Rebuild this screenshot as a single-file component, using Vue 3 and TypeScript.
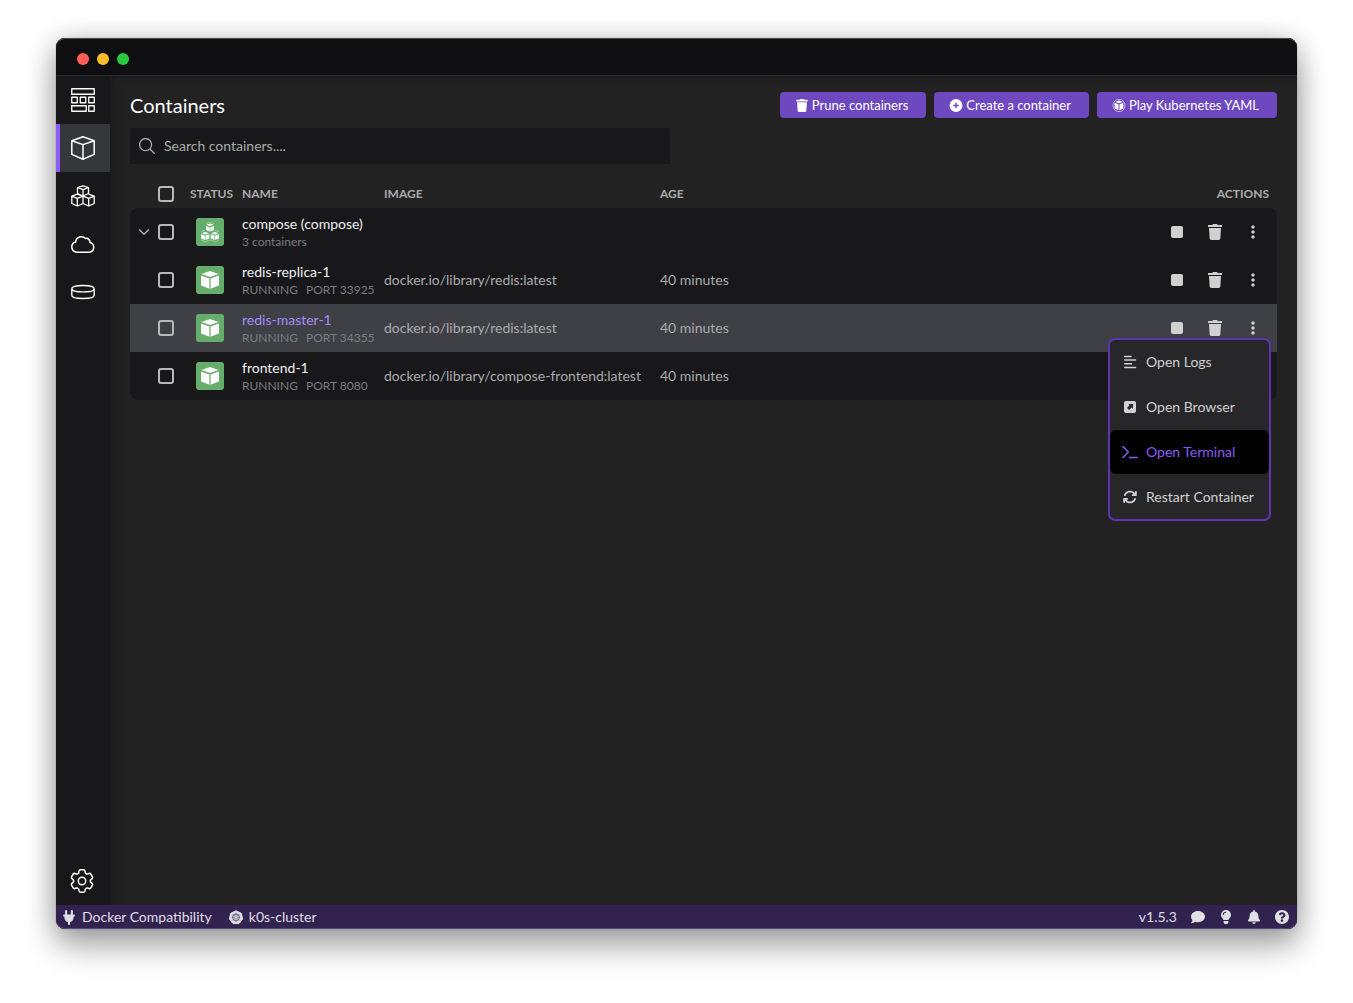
<script setup lang="ts">
import { ref } from 'vue'

interface Row {
  id: string
  name: string
  detail: string[]
  image: string
  age: string
  group?: boolean
  active?: boolean
}

const search = ref('')
const selected = ref<string[]>([])
const openMenu = ref<string | null>('redis-master')
const hovered = ref('Open Terminal')

const navItems = [
  { icon: 'dashboard', label: 'Dashboard' },
  { icon: 'cube', label: 'Containers', current: true },
  { icon: 'pods', label: 'Pods' },
  { icon: 'cloud', label: 'Images' },
  { icon: 'volume', label: 'Volumes' },
]

const toolbar = [
  { icon: 'trash', label: 'Prune containers' },
  { icon: 'plus', label: 'Create a container' },
  { icon: 'play', label: 'Play Kubernetes YAML' },
]

const rows: Row[] = [
  { id: 'compose', name: 'compose (compose)', detail: ['3 containers'], image: '', age: '', group: true },
  { id: 'redis-replica', name: 'redis-replica-1', detail: ['RUNNING', 'PORT 33925'], image: 'docker.io/library/redis:latest', age: '40 minutes' },
  { id: 'redis-master', name: 'redis-master-1', detail: ['RUNNING', 'PORT 34355'], image: 'docker.io/library/redis:latest', age: '40 minutes', active: true },
  { id: 'frontend', name: 'frontend-1', detail: ['RUNNING', 'PORT 8080'], image: 'docker.io/library/compose-frontend:latest', age: '40 minutes' },
]

const menuItems = [
  { icon: 'logs', label: 'Open Logs' },
  { icon: 'browser', label: 'Open Browser' },
  { icon: 'terminal', label: 'Open Terminal' },
  { icon: 'restart', label: 'Restart Container' },
]

const statusIcons = [
  { icon: 'comment', label: 'Feedback' },
  { icon: 'bulb', label: 'Tips' },
  { icon: 'bell', label: 'Notifications' },
  { icon: 'help', label: 'Help' },
]

function toggleMenu(id: string) {
  openMenu.value = openMenu.value === id ? null : id
}

function toggleAll(event: Event) {
  const on = (event.target as HTMLInputElement).checked
  selected.value = on ? rows.map((row) => row.id) : []
}
</script>

<template>
  <svg class="sprite" aria-hidden="true">
    <symbol id="dashboard" viewBox="0 0 24 24">
      <path d="M.75.75h22.5v5.5H.75zM.75 9.25h5.5v5.5H.75zM9.25 9.25h5.5v5.5h-5.5zM17.75 9.25h5.5v5.5h-5.5zM.75 17.75h14.5v5.5H.75zM17.75 17.75h5.5v5.5h-5.5z" fill="none" stroke="currentColor" stroke-width="1.3" stroke-linejoin="round" />
    </symbol>
    <symbol id="cube" viewBox="0 0 24 24">
      <path d="M12 .8 23.2 4.8V18.4L12 23.2.8 18.4V4.8zM.8 4.8 12 8.6 23.2 4.8M12 8.6V23.2" fill="none" stroke="currentColor" stroke-width="1.5" stroke-linejoin="round" />
    </symbol>
    <symbol id="pods" viewBox="0 0 24 24">
      <path d="M12 1.8 17.5 3.5V9.5L12 12 6.5 9.5V3.5zM6.5 3.5 12 5.6 17.5 3.5M12 5.6V12M6.3 10.2 12 12.2V19.5L6.3 22 .8 19.5V12.2zM.8 12.2 6.3 14.4 12 12.2M6.3 14.4V22M17.7 10.2 23.2 12.2V19.5L17.7 22 12 19.5V12.2M12 12.2 17.7 14.4 23.2 12.2M17.7 14.4V22" fill="none" stroke="currentColor" stroke-width="1.3" stroke-linejoin="round" />
    </symbol>
    <symbol id="cloud" viewBox="0 0 24 24">
      <path d="M6 20.2A5.2 5.2 0 0 1 4.6 10 5.9 5.9 0 0 1 14.6 6.4 3.8 3.8 0 0 1 19 10.4 5 5 0 0 1 18.3 20.2z" fill="none" stroke="currentColor" stroke-width="1.5" stroke-linejoin="round" />
    </symbol>
    <symbol id="volume" viewBox="0 0 24 24">
      <path d="M.8 8.700C.8 6.700 5.600 5.500 12 5.500S23.200 6.700 23.200 8.700 18.400 11.900 12 11.900.8 10.700.8 8.700V15.300C.8 17.300 5.600 18.500 12 18.500S23.200 17.300 23.200 15.300V8.700" fill="none" stroke="currentColor" stroke-width="1.4" />
    </symbol>
    <symbol id="gear" viewBox="2.3 2.3 19.4 19.4">
      <path d="M9.594 3.94c.09-.542.56-.94 1.11-.94h2.593c.55 0 1.02.398 1.11.94l.213 1.281c.063.374.313.686.645.87.074.04.147.083.22.127.325.196.72.257 1.075.124l1.217-.456a1.125 1.125 0 0 1 1.37.49l1.296 2.247a1.125 1.125 0 0 1-.26 1.431l-1.003.827c-.293.241-.438.613-.43.992a7.723 7.723 0 0 1 0 .255c-.008.378.137.75.43.991l1.004.827c.424.35.534.955.26 1.43l-1.298 2.247a1.125 1.125 0 0 1-1.369.491l-1.217-.456c-.355-.133-.75-.072-1.076.124a6.47 6.47 0 0 1-.22.128c-.331.183-.581.495-.644.869l-.213 1.281c-.09.543-.56.94-1.11.94h-2.594c-.55 0-1.019-.398-1.11-.94l-.213-1.281c-.062-.374-.312-.686-.644-.87a6.52 6.52 0 0 1-.22-.127c-.325-.196-.72-.257-1.076-.124l-1.217.456a1.125 1.125 0 0 1-1.369-.49l-1.297-2.247a1.125 1.125 0 0 1 .26-1.431l1.004-.827c.292-.24.437-.613.43-.991a6.932 6.932 0 0 1 0-.255c.007-.38-.138-.751-.43-.992l-1.004-.827a1.125 1.125 0 0 1-.26-1.43l1.297-2.247a1.125 1.125 0 0 1 1.37-.491l1.216.456c.356.133.751.072 1.076-.124.072-.044.146-.086.22-.128.332-.183.582-.495.644-.869l.214-1.28ZM15 12a3 3 0 1 1-6 0 3 3 0 0 1 6 0Z" fill="none" stroke="currentColor" stroke-width="1.2" stroke-linejoin="round" />
    </symbol>
    <symbol id="search" viewBox="0 0 16 16">
      <path d="M11.2 11.2 15.3 15.3M12.6 6.6a6 6 0 1 1-12 0 6 6 0 0 1 12 0z" fill="none" stroke="currentColor" stroke-width="1.3" stroke-linecap="round" />
    </symbol>
    <symbol id="chevron" viewBox="0 0 12 12">
      <path d="M1.500 3.800 6 8.300 10.500 3.800" fill="none" stroke="currentColor" stroke-width="1.5" stroke-linecap="round" stroke-linejoin="round" />
    </symbol>
    <symbol id="trash" viewBox="0 0 448 512">
      <path d="M432 32H312l-9.4-18.7A24 24 0 0 0 281.1 0H166.8a23.72 23.72 0 0 0-21.4 13.3L136 32H16A16 16 0 0 0 0 48v32a16 16 0 0 0 16 16h416a16 16 0 0 0 16-16V48a16 16 0 0 0-16-16zM53.2 467a48 48 0 0 0 47.9 45h245.8a48 48 0 0 0 47.9-45L416 128H32z" fill="currentColor" />
    </symbol>
    <symbol id="plus" viewBox="1.5 1.5 13 13">
      <path fill-rule="evenodd" d="M8 1.5a6.5 6.5 0 1 0 0 13 6.5 6.5 0 0 0 0-13zM7.3 5.2h1.4v2.1h2.1v1.4H8.700v2.1H7.300V8.700H5.200V7.300h2.100z" fill="currentColor" />
    </symbol>
    <symbol id="play" viewBox="1.3 1.3 13.4 13.4">
      <circle cx="8" cy="8" r="6.3" fill="none" stroke="currentColor" stroke-width=".8" opacity=".7" />
      <path d="M8 2.800 12 4.300 8 5.800 4 4.300zM3.400 5.200 7.500 6.700V13L3.400 11.200zM12.600 5.200 8.500 6.700V13L12.600 11.200z" fill="currentColor" />
    </symbol>
    <symbol id="box" viewBox="0 0 20 20">
      <path d="M10 1 18.500 4 10 7 1.500 4zM1 5.400 9.400 8.400V18.800L1 15.500zM19 5.400 10.600 8.400V18.800L19 15.500z" fill="currentColor" />
    </symbol>
    <symbol id="boxes" viewBox="0 0 20 20">
      <path d="M10 1.500 13.600 2.800 10 4.100 6.400 2.800zM6 4 9.700 5.300V9.400L6 8zM14 4 10.300 5.300V9.400L14 8zM5.200 10 8.900 11.300 5.200 12.600 1.500 11.300zM1 12.300 4.900 13.600V18L1 16.500zM9.300 12.300 5.500 13.600V18L9.300 16.500zM14.800 10 18.500 11.300 14.800 12.600 11.100 11.300zM10.700 12.300 14.500 13.600V18L10.700 16.500zM19 12.300 15.100 13.600V18L19 16.500z" fill="currentColor" />
      <path d="M6 1.500 10 0 14 1.500M1 9.500 5 8.300M15 8.300 19 9.500M1 18 5 19.600 10 18 15 19.600 19 18" fill="none" stroke="currentColor" stroke-width=".5" opacity=".7" />
    </symbol>
    <symbol id="stop" viewBox="0 0 16 16">
      <rect x="2" y="2" width="12" height="12" rx="2" fill="currentColor" />
    </symbol>
    <symbol id="kebab" viewBox="0 0 16 16">
      <path d="M8 1.300a1.700 1.700 0 1 0 0 3.400 1.700 1.700 0 0 0 0-3.400zM8 6.300a1.700 1.700 0 1 0 0 3.400 1.700 1.700 0 0 0 0-3.400zM8 11.300a1.700 1.700 0 1 0 0 3.400 1.700 1.700 0 0 0 0-3.400z" fill="currentColor" />
    </symbol>
    <symbol id="logs" viewBox="0 0 16 16">
      <path d="M2.700 2.500H9M2.700 6.100H13.500M2.700 9.800H9.500M2.700 13.400H13.500" fill="none" stroke="currentColor" stroke-width="1.5" stroke-linecap="round" />
    </symbol>
    <symbol id="browser" viewBox="0 0 16 16">
      <path fill-rule="evenodd" d="M4 2h8a2 2 0 0 1 2 2v8a2 2 0 0 1-2 2H4a2 2 0 0 1-2-2V4a2 2 0 0 1 2-2zM6.300 5l1.300 1.300L5 8.900 7.100 11l2.600-2.600L11 9.700V5z" fill="currentColor" />
    </symbol>
    <symbol id="terminal" viewBox="0 0 16 16">
      <path d="M1 2.500 6.300 8 1 13.500M7.500 13.500H15.300" fill="none" stroke="currentColor" stroke-width="1.5" stroke-linecap="round" stroke-linejoin="round" />
    </symbol>
    <symbol id="restart" viewBox="-26 -26 564 564">
      <path d="M105.1 202.6c7.7-21.8 20.2-42.3 37.8-59.8c62.5-62.5 163.8-62.5 226.3 0L386.3 160H352c-17.7 0-32 14.3-32 32s14.3 32 32 32H463.9c17.7 0 32-14.3 32-32V80c0-17.7-14.3-32-32-32s-32 14.3-32 32v35.2L414.4 97.6c-87.5-87.5-229.3-87.5-316.8 0C73.2 122 55.6 150.7 44.8 181.4c-5.9 16.7 2.9 34.9 19.5 40.8s34.9-2.9 40.8-19.5zM39 289.3c-5 1.5-9.8 4.2-13.7 8.2c-4 4-6.7 8.8-8.1 14c-.3 1.2-.6 2.5-.8 3.8c-.3 1.7-.4 3.4-.4 5.1V432c0 17.7 14.3 32 32 32s32-14.3 32-32V396.9l17.6 17.5c87.5 87.4 229.3 87.4 316.7 0c24.4-24.4 42.1-53.1 52.9-83.7c5.9-16.7-2.9-34.9-19.5-40.8s-34.9 2.9-40.8 19.5c-7.7 21.8-20.2 42.3-37.8 59.8c-62.5 62.5-163.8 62.5-226.3 0L125.6 352H160c17.7 0 32-14.3 32-32s-14.3-32-32-32H48.4c-1.6 0-3.2.1-4.8.3s-3.1.5-4.6 1z" fill="currentColor" />
    </symbol>
    <symbol id="plug" viewBox="1 .7 14 14.6">
      <path d="M4.200 1.700a1 1 0 0 1 2 0V5h3.600V1.700a1 1 0 0 1 2 0V5h1.200a.6.6 0 0 1 .6.6v1a.6.6 0 0 1-.6.6h-.6v1A4.400 4.400 0 0 1 9 12.400V15H7v-2.600a4.400 4.400 0 0 1-3.400-4.200v-1H3a.6.6 0 0 1-.6-.6v-1A.6.6 0 0 1 3 5h1.200z" fill="currentColor" />
    </symbol>
    <symbol id="helm" viewBox="0 0 16 16">
      <path d="M8 .8 13.700 3.500 15.100 9.600 11.200 14.500H4.800L.9 9.600 2.300 3.500z" fill="currentColor" stroke="currentColor" stroke-linejoin="round" />
      <path d="M8 3V6.600M8 9V12.600M3.300 7.800H6.800M9.200 7.800H12.700M4.600 4.400 7.100 7M11.400 4.400 8.900 7M4.600 11.200 7.100 8.700M11.400 11.200 8.900 8.700M11.700 7.800a3.700 3.700 0 1 1-7.400 0 3.700 3.700 0 0 1 7.400 0z" fill="none" stroke="#31224f" stroke-width=".6" />
    </symbol>
    <symbol id="comment" viewBox="0 0 512 512">
      <path d="M256 32C114.6 32 0 125.1 0 240c0 49.6 21.4 95 57 130.7C44.5 421.1 2.7 466 2.2 466.5c-2.2 2.3-2.8 5.7-1.5 8.7S4.8 480 8 480c66.3 0 116-31.8 140.6-51.4 32.7 12.3 69 19.4 107.4 19.4 141.4 0 256-93.1 256-208S397.4 32 256 32z" fill="currentColor" />
    </symbol>
    <symbol id="bulb" viewBox="1 1 14 14">
      <path fill-rule="evenodd" d="M8 1a5 5 0 0 1 5 5c0 2.300-1.900 3.300-2.500 5.100h-5C4.900 9.300 3 8.300 3 6a5 5 0 0 1 5-5zM8 2.800A3.200 3.200 0 0 0 4.800 6h.9A2.300 2.300 0 0 1 8 3.700zM5.600 12h4.800v1.200A1.800 1.800 0 0 1 8.600 15H7.400a1.800 1.800 0 0 1-1.800-1.800z" fill="currentColor" />
    </symbol>
    <symbol id="bell" viewBox="0 0 448 512">
      <path d="M224 512c35.32 0 63.97-28.65 63.97-64H160.03c0 35.35 28.65 64 63.97 64zm215.39-149.71c-19.32-20.76-55.47-51.99-55.47-154.29 0-77.7-54.48-139.9-127.94-155.16V32c0-17.67-14.32-32-31.98-32s-31.98 14.33-31.98 32v20.84C118.56 68.1 64.08 130.3 64.08 208c0 102.3-36.15 133.53-55.47 154.29-6 6.45-8.66 14.16-8.61 21.71.11 16.4 12.98 32 32.1 32h383.8c19.12 0 32-15.6 32.1-32 .05-7.55-2.61-15.27-8.61-21.71z" fill="currentColor" />
    </symbol>
    <symbol id="help" viewBox="8 8 496 496">
      <path d="M504 256c0 136.997-111.043 248-248 248S8 392.997 8 256C8 119.083 119.043 8 256 8s248 111.083 248 248zM262.655 90c-54.497 0-89.255 22.957-116.549 63.758-3.536 5.286-2.353 12.415 2.715 16.258l34.699 26.31c5.205 3.947 12.621 3.008 16.665-2.122 17.864-22.658 30.113-35.797 57.303-35.797 20.429 0 45.698 13.148 45.698 32.958 0 14.976-12.363 22.667-32.534 33.976C247.128 238.528 216 254.941 216 296v4c0 6.627 5.373 12 12 12h56c6.627 0 12-5.373 12-12v-1.333c0-28.462 83.186-29.647 83.186-106.667 0-58.002-60.165-102-116.531-102zM256 338c-25.365 0-46 20.635-46 46 0 25.364 20.635 46 46 46s46-20.636 46-46c0-25.365-20.636-46-46-46z" fill="currentColor" />
    </symbol>
  </svg>

  <div class="desktop">
    <div class="window">
      <header class="titlebar">
        <button class="light close" aria-label="Close"></button>
        <button class="light minimize" aria-label="Minimize"></button>
        <button class="light zoom" aria-label="Zoom"></button>
      </header>

      <div class="workspace">
        <nav class="sidebar" aria-label="Main">
          <a v-for="item in navItems" :key="item.icon" href="#" class="nav-item" :class="{ current: item.current }" :aria-label="item.label">
            <svg class="nav-icon"><use :href="'#' + item.icon" /></svg>
          </a>
          <a href="#" class="nav-item settings" aria-label="Settings">
            <svg class="nav-icon"><use href="#gear" /></svg>
          </a>
        </nav>

        <main class="content">
          <div class="page-header">
            <h1>Containers</h1>
            <div class="toolbar">
              <button v-for="tool in toolbar" :key="tool.icon" class="primary">
                <svg class="tool-icon"><use :href="'#' + tool.icon" /></svg>
                <span>{{ tool.label }}</span>
              </button>
            </div>
          </div>

          <label class="search">
            <svg class="search-icon"><use href="#search" /></svg>
            <input v-model="search" type="text" placeholder="Search containers...." aria-label="Search containers" />
          </label>

          <table class="containers">
            <colgroup>
              <col class="col-expand" />
              <col class="col-check" />
              <col class="col-status" />
              <col class="col-name" />
              <col class="col-image" />
              <col />
              <col class="col-actions" />
            </colgroup>
            <thead>
              <tr>
                <th></th>
                <th><input type="checkbox" class="check" aria-label="Select all" @change="toggleAll" /></th>
                <th class="status">STATUS</th>
                <th>NAME</th>
                <th>IMAGE</th>
                <th>AGE</th>
                <th class="actions-head">ACTIONS</th>
              </tr>
            </thead>
            <tbody>
              <tr v-for="row in rows" :key="row.id" :class="{ active: row.active }">
                <td class="expand">
                  <button v-if="row.group" class="expander" aria-label="Collapse">
                    <svg class="chevron"><use href="#chevron" /></svg>
                  </button>
                </td>
                <td><input v-model="selected" type="checkbox" class="check" :value="row.id" :aria-label="'Select ' + row.name" /></td>
                <td>
                  <span class="badge">
                    <svg class="badge-icon"><use :href="row.group ? '#boxes' : '#box'" /></svg>
                  </span>
                </td>
                <td>
                  <div class="name">{{ row.name }}</div>
                  <div class="detail"><span v-for="part in row.detail" :key="part">{{ part }}</span></div>
                </td>
                <td>{{ row.image }}</td>
                <td>{{ row.age }}</td>
                <td>
                  <div class="actions">
                    <button class="action" aria-label="Stop"><svg class="action-icon"><use href="#stop" /></svg></button>
                    <button class="action" aria-label="Delete"><svg class="action-icon"><use href="#trash" /></svg></button>
                    <button class="action" aria-label="More" @click="toggleMenu(row.id)"><svg class="action-icon"><use href="#kebab" /></svg></button>
                    <div v-if="openMenu === row.id" class="menu" role="menu">
                      <button v-for="item in menuItems" :key="item.icon" role="menuitem" class="menu-item" :class="{ hovered: hovered === item.label }" @mouseenter="hovered = item.label">
                        <svg class="menu-icon"><use :href="'#' + item.icon" /></svg>
                        <span>{{ item.label }}</span>
                      </button>
                    </div>
                  </div>
                </td>
              </tr>
            </tbody>
          </table>
        </main>
      </div>

      <footer class="statusbar">
        <button class="status-entry"><svg class="status-icon"><use href="#plug" /></svg>Docker Compatibility</button>
        <button class="status-entry"><svg class="status-icon"><use href="#helm" /></svg>k0s-cluster</button>
        <div class="status-right">
          <span>v1.5.3</span>
          <button v-for="item in statusIcons" :key="item.icon" class="status-button" :aria-label="item.label">
            <svg class="status-glyph"><use :href="'#' + item.icon" /></svg>
          </button>
        </div>
      </footer>
    </div>
  </div>
</template>

<style>
body {
  margin: 0;
  background: #fff;
}
</style>

<style scoped>
.sprite {
  position: absolute;
  width: 0;
  height: 0;
}

.desktop {
  box-sizing: border-box;
  min-height: 100vh;
  padding: 38px 56px 74px;
  display: flex;
  font-family: Lato, 'Liberation Sans', sans-serif;
  font-size: 14px;
  line-height: 20px;
  color: #aaabac;
}

button {
  padding: 0;
  border: 0;
  background: none;
  color: inherit;
  font: inherit;
}

svg {
  display: block;
  flex: none;
}

.window {
  flex: 1;
  min-width: 0;
  display: flex;
  flex-direction: column;
  border-radius: 9px;
  background: #222;
  box-shadow: 0 0 1px rgba(0, 0, 0, 0.6), 0 18px 32px rgba(0, 0, 0, 0.3), 0 2px 28px rgba(0, 0, 0, 0.22);
}

.titlebar {
  display: flex;
  align-items: center;
  gap: 8px;
  box-sizing: border-box;
  height: 38px;
  padding: 4px 21px 0;
  border-radius: 9px 9px 0 0;
  border-bottom: 1px solid #29292b;
  background: #0f0f11;
  box-shadow: inset 0 1px 0 #4c4c4e;
}

.light {
  width: 12px;
  height: 12px;
  border-radius: 50%;
}

.close {
  background: #ff5f57;
}

.minimize {
  background: #febc2e;
}

.zoom {
  background: #28c840;
}

.workspace {
  flex: 1;
  display: flex;
}

.sidebar {
  flex: none;
  width: 54px;
  display: flex;
  flex-direction: column;
  background: #18181b;
}

.nav-item {
  box-sizing: border-box;
  height: 48px;
  display: flex;
  align-items: center;
  padding-left: 11px;
  border-left: 4px solid transparent;
  color: #fff;
}

.nav-item.current {
  background: #36373d;
  border-left-color: #8b5cf6;
}

.settings {
  padding-left: 10px;
  margin-top: auto;
}

.nav-icon {
  width: 24px;
  height: 24px;
}

.content {
  flex: 1;
  min-width: 0;
  padding: 16px 20px;
  box-shadow: inset 6px 4px 8px -4px #1a1a1a;
}

.page-header {
  display: flex;
  align-items: center;
  justify-content: space-between;
  height: 26px;
  margin-bottom: 10px;
}

h1 {
  margin: 0;
  font-size: 20px;
  line-height: 28px;
  font-weight: 400;
  color: #fff;
}

.toolbar {
  display: flex;
  gap: 8px;
}

.primary {
  display: flex;
  align-items: center;
  gap: 3px;
  height: 26px;
  padding: 0 18px 0 15px;
  border-radius: 4px;
  background: #6d48bf;
  color: #fff;
  font-size: 13px;
}

.tool-icon {
  width: 14px;
  height: 13px;
}

.search {
  display: flex;
  align-items: center;
  gap: 9px;
  box-sizing: border-box;
  width: 50%;
  max-width: 540px;
  height: 36px;
  padding: 0 9px;
  margin-bottom: 16px;
  border-radius: 2px;
  background: #18181b;
}

.search-icon {
  width: 16px;
  height: 16px;
}

.search input {
  flex: 1;
  min-width: 0;
  padding: 0;
  border: 0;
  outline: 0;
  background: none;
  color: inherit;
  font: inherit;
}

.search input::placeholder {
  color: #aaabac;
  opacity: 1;
}

.containers {
  width: 100%;
  table-layout: fixed;
  border-collapse: separate;
  border-spacing: 0;
}

.col-expand {
  width: 28px;
}

.col-check {
  width: 20px;
}

.col-status {
  width: 64px;
}

.col-name {
  width: 142px;
}

.col-image {
  width: 276px;
}

.col-actions {
  width: 180px;
}

th {
  height: 28px;
  padding: 0;
  font-size: 12px;
  line-height: 16px;
  font-weight: 700;
  text-align: left;
}

th.actions-head {
  padding-right: 8px;
  text-align: right;
}

th.status {
  padding-left: 12px;
}

td {
  height: 48px;
  padding: 0;
  background: #18181b;
  white-space: nowrap;
}

.active td {
  background: #3f4046;
}

tbody tr:first-child td:first-child {
  border-top-left-radius: 8px;
}

tbody tr:first-child td:last-child {
  border-top-right-radius: 8px;
}

tbody tr:last-child td:first-child {
  border-bottom-left-radius: 8px;
}

tbody tr:last-child td:last-child {
  border-bottom-right-radius: 8px;
}

.check {
  appearance: none;
  display: block;
  box-sizing: border-box;
  width: 16px;
  height: 16px;
  margin: 0;
  border: 2px solid #b8b8b8;
  border-radius: 3px;
}

.check:checked {
  background: #8b5cf6;
}

.expander {
  display: flex;
  justify-content: center;
  width: 28px;
}

.chevron {
  width: 12px;
  height: 12px;
}

.badge {
  display: flex;
  align-items: center;
  justify-content: center;
  width: 28px;
  height: 28px;
  margin: 0 auto;
  border-radius: 3px;
  background: #65ad6b;
  color: #fff;
}

.badge-icon {
  width: 20px;
  height: 20px;
}

.name {
  color: #f0f0f0;
}

.active .name {
  color: #a78bfa;
}

.detail {
  display: flex;
  gap: 8px;
  font-size: 12px;
  line-height: 16px;
  color: #7c7c7e;
}

.actions {
  position: relative;
  display: flex;
  align-items: center;
  justify-content: flex-end;
  height: 48px;
  padding-right: 5px;
  color: #d1d1d1;
}

.action {
  display: flex;
  align-items: center;
  justify-content: center;
  width: 38px;
  height: 32px;
}

.action-icon {
  width: 16px;
  height: 16px;
}

.menu {
  position: absolute;
  z-index: 1;
  top: 34px;
  right: 6px;
  display: flex;
  flex-direction: column;
  gap: 1px;
  box-sizing: border-box;
  min-width: 163px;
  border: 2px solid #5f34b1;
  border-radius: 7px;
  background: #27272a;
}

.menu-item {
  display: flex;
  align-items: center;
  gap: 8px;
  height: 44px;
  padding: 0 12px;
  border-radius: 6px;
  white-space: nowrap;
}

.menu-item.hovered {
  background: #000;
  color: #8b5cf6;
}

.menu-icon {
  width: 16px;
  height: 16px;
}

.statusbar {
  display: flex;
  align-items: center;
  gap: 16px;
  height: 24px;
  padding: 0 8px 0 5px;
  border-radius: 0 0 9px 9px;
  background: #31224f;
  color: #e0dfe4;
  box-shadow: inset 0 -1px 0 #584a73;
}

.status-entry {
  display: flex;
  align-items: center;
  gap: 5px;
}

.status-icon {
  width: 16px;
  height: 15px;
}

.status-right {
  display: flex;
  align-items: center;
  gap: 14px;
  margin-left: auto;
}

.status-glyph {
  width: 14px;
  height: 14px;
}
</style>
